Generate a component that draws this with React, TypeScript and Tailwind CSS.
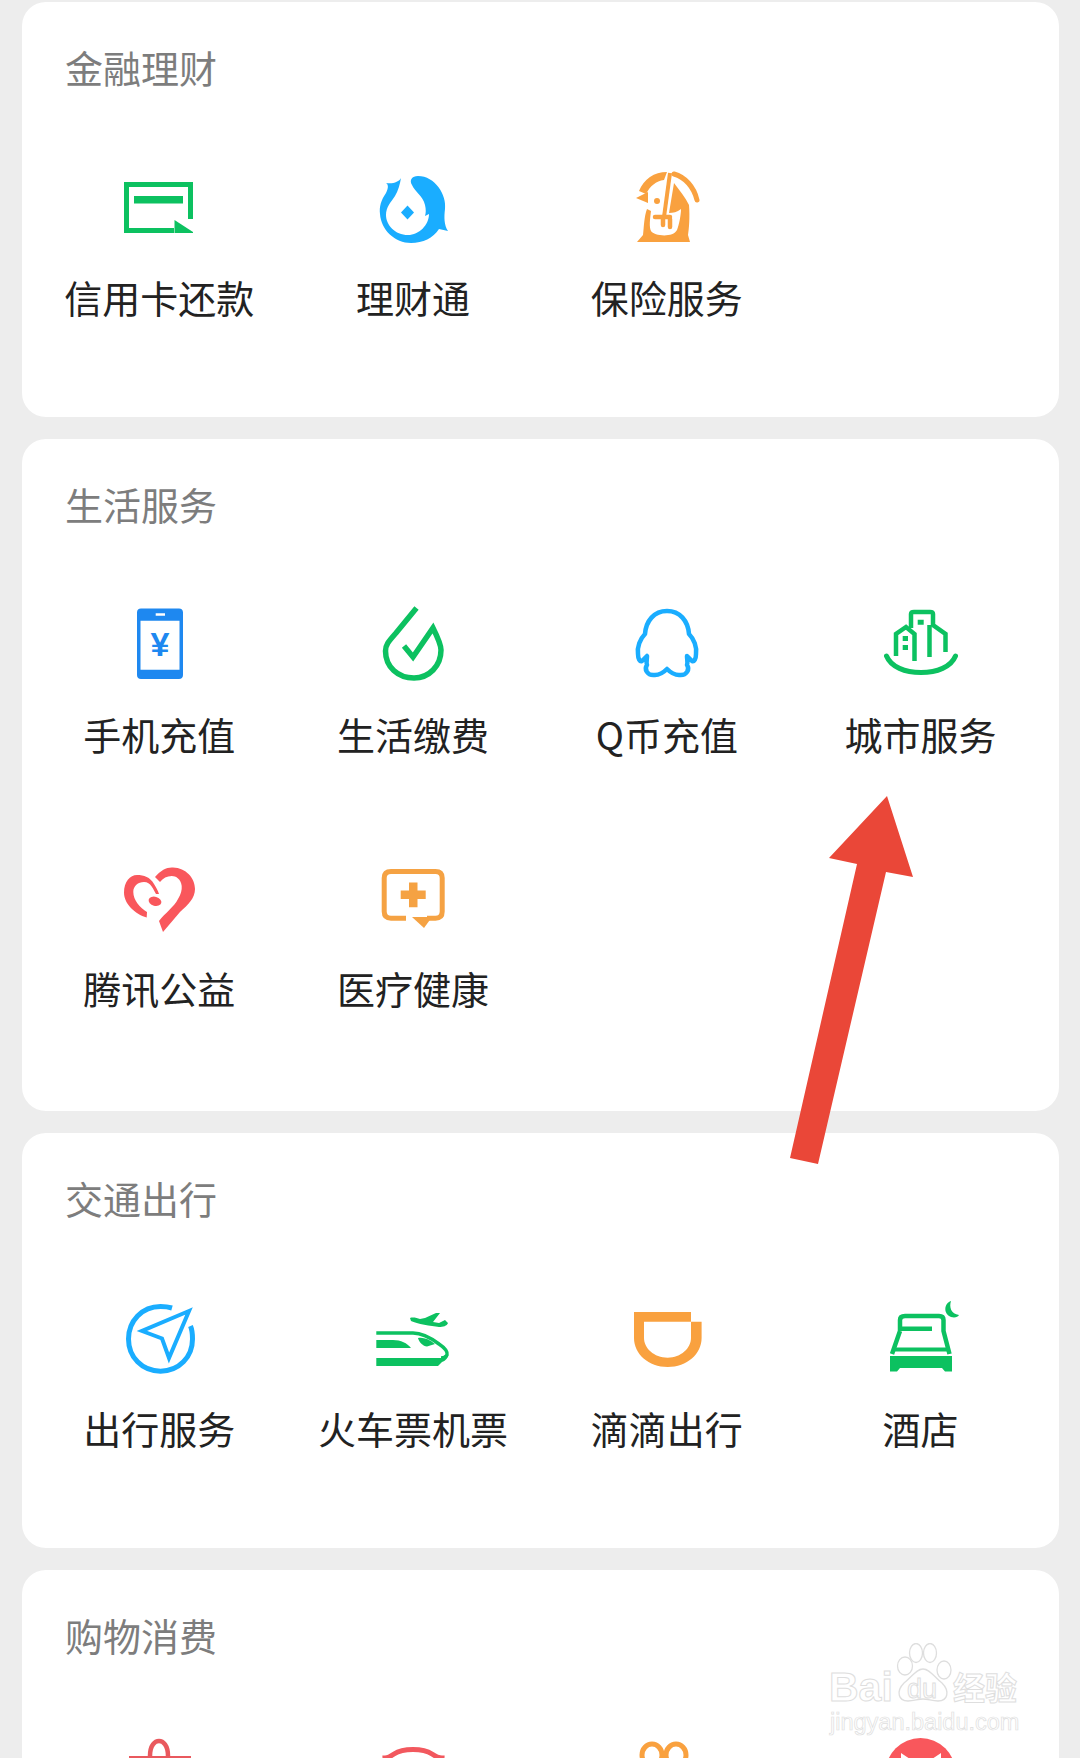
import React from 'react';

const G = '#0cc160';
const B = '#1aadff';
const O = '#f9a13f';
const R = '#f9575c';

function Box({ children }: { children: React.ReactNode }) {
  return (
    <svg viewBox="0 0 80 80" fill="none" className="w-[80px] h-[80px] block overflow-visible">
      {children}
    </svg>
  );
}

const CardIcon = () => (
  <Box>
    <path d="M71.5 52V17.5H7.5V63.5H55" stroke={G} strokeWidth="5" />
    <rect x="15" y="29" width="49" height="7.5" fill={G} />
    <path d="M55.5 53L74 65V66H55.5Z" fill={G} />
  </Box>
);
const FishIcon = () => (
  <Box>
    <path
      d="M28 11C26 15 20 17 13 16C16 18 15 22 13 26C8 33 6 40 7 47C8 63 22 76 38 76C50 76 60 71 66 62L75 64C71 58 71 50 72 42C74 28 62 9 45 9C39 9 36 13 39 18C42 25 50 29 52 38C53 42 53 46 52 49L56 47C56 58 46 68 35 68C22 68 13 58 13 48C13 40 18 35 22 29C25 24 27 17 28 11Z"
      fill={B}
    />
    <path d="M34.5 38.5L41 45.5L34.5 52.5L28 45.5Z" fill={B} />
  </Box>
);
const PenguinIcon = () => (
  <Box>
    <path d="M12 24C17 12 27 5 40 5L37 13C29 14 23 19 19 27Z" fill={O} />
    <path d="M47 7C58 10 67 20 70 33" stroke={O} strokeWidth="5" strokeLinecap="round" />
    <path d="M43 6L37 50" stroke={O} strokeWidth="4" />
    <path d="M9 31L21 25V36Z" fill={O} />
    <circle cx="30" cy="34" r="3" fill={O} />
    <path d="M47 16C53 24 58 30 62 38C63 50 62 62 61 68L63 75H10L16 68C17 60 17 50 20 42L24 44C23 52 22 60 24 64C27 69 46 71 50 63C52 58 54 48 54 42C50 45 46 46 42 46L45 28Z" fill={O} />
    <path d="M28 50H43M36 50V58M43 52V60" stroke={O} strokeWidth="4.500" strokeLinecap="round" />
  </Box>
);
const PhoneIcon = () => (
  <Box>
    <path
      fillRule="evenodd"
      d="M22 4.5H60C62.500 4.500 64 6 64 8.500V71C64 73.500 62.500 75 60 75H22C19.500 75 18 73.500 18 71V8.500C18 6 19.500 4.500 22 4.500ZM21.500 16.700V65.700H60.500V16.700ZM36.700 9.300V11.700H46V9.300Z"
      fill="#1e88f0"
    />
    <text x="41" y="52" textAnchor="middle" fontFamily="Liberation Sans" fontWeight="700" fontSize="34" fill="#1e88f0">
      ¥
    </text>
  </Box>
);
const DropIcon = () => (
  <Box>
    <path
      d="M43.500 4L23 29C15 38 12.500 41 12.500 47C12.500 63 25 74 41 74C56 74 68 62 68 46C68 40 64 32 60 24L40 53L31 42"
      stroke={G}
      strokeWidth="5.500"
    />
  </Box>
);
const QQIcon = () => (
  <Box>
    <path
      d="M40 7C27 7 19 17 18 30C13 35 10 43 11 50C11 55 13 58 15 57L20 52C20 56 19 58 20 61C17 65 20 72 28 71C33 71 37 68 40 65C43 68 47 71 52 71C60 72 63 65 60 61C61 58 60 56 60 52L65 57C67 58 69 55 69 50C70 43 67 35 62 30C61 17 53 7 40 7Z"
      stroke={B}
      strokeWidth="4.500"
      strokeLinejoin="round"
    />
  </Box>
);
const CityIcon = () => (
  <Box>
    <path d="M5.500 52C10 63 24 68.500 40 68.500C56 68.500 70 63 74.500 52" stroke={G} strokeWidth="5" strokeLinecap="round" />
    <path d="M15 52V30L25 23L33.500 30V57" stroke={G} strokeWidth="4.500" />
    <path d="M30 24V10C30 8.500 31 8 33 8H49C51 8 52 8.500 52 10V21L64.500 30V48" stroke={G} strokeWidth="4.500" />
    <path d="M48.500 21V53" stroke={G} strokeWidth="4.500" />
    <path d="M36.700 15.700H42.700V20.700H36.700ZM21.700 32H27V37H21.700ZM21.700 41H27V46H21.700Z" fill={G} />
  </Box>
);
const HeartIcon = () => (
  <Box>
    <path
      d="M36 19C42 12 48 9 54 9.500C67 10 76 20 76 31C76 40 69 47 61 54L44 74L40 63C46 55 55 49 59 41C62 36 63 32 62.700 28C62 21 57 18 52.700 18C48 18 44 20 41 24Z"
      fill={R}
    />
    <path
      d="M27.700 59.500C16 56 5 46 5 34.500C5 24 11 17 18 17C25 17 31 19 35 26C37 29 39 33 40 36L37 36C34 31 32 24 25 24C19 24 14.300 28 14.300 34C14.300 42 21 50 28 54Z"
      fill={R}
    />
    <ellipse cx="36" cy="43.300" rx="6.500" ry="4.500" transform="rotate(15 36 43.300)" fill={R} />
  </Box>
);
const MedicalIcon = () => (
  <Box>
    <path
      d="M33 60.200H18C13.500 60.200 11.200 58 11.200 53.500V20C11.200 15.500 13.500 13.500 18 13.500H62.500C67 13.500 69.200 15.500 69.200 20V53.500C69.200 58 67 60.200 62.500 60.200H54"
      stroke="#f5a243"
      strokeWidth="5"
    />
    <path d="M39 59H59L51 70Z" fill="#f5a243" />
    <path d="M36 24.500H44.500V32.500H52.700V41H44.500V49.300H36V41H27.700V32.500H36Z" fill="#f5a243" />
  </Box>
);
const NavIcon = () => (
  <Box>
    <path
      d="M53 10C49 8.800 45 8.500 41.500 8.500C23 8.500 9.500 23 9.500 41C9.500 59 23 73.200 41.500 73.200C60 73.200 73.500 59 73.500 41C73.500 36 73 31.500 71.500 28"
      stroke={B}
      strokeWidth="5"
    />
    <path d="M70 13L23 33L43 40.500L50 60Z" stroke={B} strokeWidth="4" strokeLinejoin="miter" />
  </Box>
);
const TrainIcon = () => (
  <Box>
    <path d="M37 20C40 19 44 20 47 21L52 20L63 15H67L60 24L66 25L72 22L75 25C74 28 70 29 66 29C58 28 44 26 38 23Z" fill={G} />
    <path d="M3.300 35H40C50 35 58 40 66 46C72 50 75 53 74 57C73 59 71 60 68 60" stroke={G} strokeWidth="3.500" />
    <path d="M3.300 42H20C28 42 34 45 38 50H3.300Z" fill={G} />
    <path d="M45 40C50 39 56 41 62 46L54 48.500C50 48.500 46 44 45 40Z" fill={G} />
    <path d="M3.300 60H68L75 55C76 60 72 63 69 64L65 68H3.300Z" fill={G} />
  </Box>
);
const DidiIcon = () => (
  <Box>
    <path
      d="M7 14H64V23.700H74.600V40C74.600 56 60 69 40.700 69C21.500 69 7 56 7 40ZM17 23.700V40C17 50 27 59.700 40.700 59.700C54 59.700 64 50 64 40V23.700Z"
      fill={O}
      fillRule="evenodd"
    />
  </Box>
);
const HotelIcon = () => (
  <Box>
    <path d="M70 3C63 5 62 16 70 19C74 20 77 19 78 17C70 16 68 9 70 3Z" fill={G} />
    <path d="M19 33V22C19 19 21 18 24 18H58C61 18 62.500 19 62.500 22V33L68.500 56M19 33L11 56" stroke={G} strokeWidth="4.500" />
    <rect x="20" y="28.500" width="31" height="4.500" fill={G} />
    <rect x="14" y="49.500" width="53" height="4" fill={G} />
    <path d="M9 58H71V73.500H64L61 70H19L16 73.500H9Z" fill={G} />
  </Box>
);
const BagIcon = () => (
  <Box>
    <path d="M31 21C31 10 36 6 40 6C44 6 49 10 49 21" stroke="#e9595e" strokeWidth="4.500" />
    <rect x="10" y="21" width="62" height="20" fill="#e9595e" />
  </Box>
);
const PigIcon = () => (
  <Box>
    <path
      d="M13 42L12 23C15 23 18 21 21 19C30 13 50 13 59 19C62 21 65 23 69 23L68 42"
      stroke="#f2585e"
      strokeWidth="5"
    />
  </Box>
);
const GiftIcon = () => (
  <Box>
    <ellipse cx="25" cy="20" rx="10" ry="11" stroke={O} strokeWidth="5" />
    <ellipse cx="49" cy="20" rx="10" ry="11" stroke={O} strokeWidth="5" />
  </Box>
);
const CatIcon = () => (
  <Box>
    <circle cx="39.500" cy="38" r="35" fill={R} />
    <path d="M20 18L29 24H51L60 18V50H20Z" fill="#fff" />
  </Box>
);

type Item = { label?: string; icon: React.ReactNode };

function Cell({ label, icon }: Item) {
  return (
    <div className="h-[254px] pt-[70px] flex flex-col items-center">
      {icon}
      {label && <div className="mt-[25px] h-[50px] leading-[50px] text-[38px] text-[#222222] whitespace-nowrap">{label}</div>}
    </div>
  );
}

function Card({ title, items, pad }: { title: string; items: Item[]; pad: string }) {
  return (
    <section className={`bg-white rounded-[24px] shrink-0 ${pad}`}>
      <h2 className="pt-[37px] pl-[43.500px] h-[95px] leading-[55px] text-[38px] font-normal text-[#7d7d7d]">{title}</h2>
      <div className="grid grid-cols-4 px-[11px]">
        {items.map((it, i) => (
          <Cell key={i} {...it} />
        ))}
      </div>
    </section>
  );
}

export default function App() {
  return (
    <div className="relative w-[1080px] h-[1758px] overflow-hidden bg-[#ededed] px-[21.500px] pt-[2px] flex flex-col gap-[22px] font-['Noto_Sans_CJK_SC','Noto_Sans',sans-serif]">
      <Card
        title="金融理财"
        pad="pb-[66px]"
        items={[
          { label: '信用卡还款', icon: <CardIcon /> },
          { label: '理财通', icon: <FishIcon /> },
          { label: '保险服务', icon: <PenguinIcon /> },
        ]}
      />
      <Card
        title="生活服务"
        pad="pb-[69px]"
        items={[
          { label: '手机充值', icon: <PhoneIcon /> },
          { label: '生活缴费', icon: <DropIcon /> },
          { label: 'Q币充值', icon: <QQIcon /> },
          { label: '城市服务', icon: <CityIcon /> },
          { label: '腾讯公益', icon: <HeartIcon /> },
          { label: '医疗健康', icon: <MedicalIcon /> },
        ]}
      />
      <Card
        title="交通出行"
        pad="pb-[66px]"
        items={[
          { label: '出行服务', icon: <NavIcon /> },
          { label: '火车票机票', icon: <TrainIcon /> },
          { label: '滴滴出行', icon: <DidiIcon /> },
          { label: '酒店', icon: <HotelIcon /> },
        ]}
      />
      <Card
        title="购物消费"
        pad="pb-[66px]"
        items={[{ icon: <BagIcon /> }, { icon: <PigIcon /> }, { icon: <GiftIcon /> }, { icon: <CatIcon /> }]}
      />

      {/* red annotation arrow */}
      <svg viewBox="0 0 1080 1758" className="absolute left-0 top-0 w-[1080px] h-[1758px] pointer-events-none">
        <path d="M887 796L829 858L857 864L790 1158L818 1164L886 872L913 877Z" fill="#ea4738" />
      </svg>

      {/* watermark */}
      <div className="absolute left-[829px] top-[1664px] text-[41px] leading-[46px] font-bold font-['Liberation_Sans',sans-serif] text-transparent [-webkit-text-stroke:1px_#dedede]">
        Bai
      </div>
      <svg viewBox="0 0 60 64" fill="none" stroke="#dedede" strokeWidth="1.300" className="absolute left-[892px] top-[1643px] w-[60px] h-[64px]">
        <ellipse cx="13" cy="23" rx="7.500" ry="9" />
        <ellipse cx="24" cy="10" rx="6.500" ry="9.500" />
        <ellipse cx="38" cy="10" rx="6.500" ry="9.500" />
        <ellipse cx="52" cy="27" rx="7" ry="9" />
        <path d="M31 26C38 26 42 34 50 40C58 48 56 58 46 58C40 58 36 56 31 56C26 56 22 58 16 58C6 58 4 48 12 40C20 34 24 26 31 26Z" />
      </svg>
      <div className="absolute left-[907px] top-[1674px] text-[27px] leading-[30px] font-['Liberation_Sans',sans-serif] text-transparent [-webkit-text-stroke:1px_#dedede]">
        du
      </div>
      <div className="absolute left-[953px] top-[1666px] text-[32px] leading-[40px] font-bold text-transparent [-webkit-text-stroke:1px_#dedede]">
        经验
      </div>
      <div className="absolute left-[830px] top-[1710px] text-[23.500px] leading-[24px] font-['Liberation_Sans',sans-serif] text-transparent [-webkit-text-stroke:0.700px_#dedede]">
        jingyan.baidu.com
      </div>
    </div>
  );
}
